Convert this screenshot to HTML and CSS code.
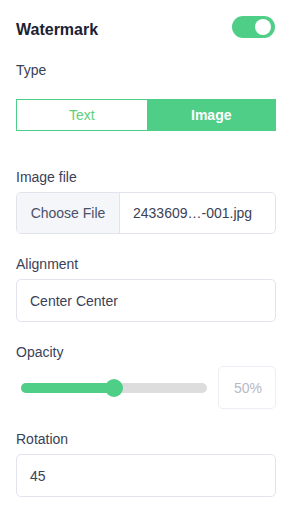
FILE: index.html
```html
<!DOCTYPE html>
<html>
<head>
<meta charset="utf-8">
<link rel="stylesheet" href="styles.css">
</head>
<body>
<div class="panel">
  <div class="header">
    <span class="title">Watermark</span>
    <span class="toggle"><span class="knob"></span></span>
  </div>
  <div class="label type-label">Type</div>
  <div class="segment">
    <div class="seg seg-off">Text</div>
    <div class="seg seg-on">Image</div>
  </div>
  <div class="label first">Image file</div>
  <div class="file box">
    <div class="choose">Choose File</div>
    <div class="fname">2433609…-001.jpg</div>
  </div>
  <div class="label">Alignment</div>
  <div class="box field">Center Center</div>
  <div class="label">Opacity</div>
  <div class="slider-row">
    <div class="slider">
      <div class="track"><div class="fill" style="width:50%"></div></div>
      <div class="thumb" style="left:50%"></div>
    </div>
    <div class="box pct">50%</div>
  </div>
  <div class="label">Rotation</div>
  <div class="box field">45</div>
</div>
</body>
</html>
```
FILE: styles.css
```css
html, body {
  margin: 0;
  padding: 0;
  background: #ffffff;
}
body {
  font-family: "Liberation Sans", Arial, sans-serif;
  color: #3b4157;
}
.panel {
  width: 260px;
  padding: 16px 19px 0 16px;
  display: flex;
  flex-direction: column;
}
.header {
  display: flex;
  justify-content: space-between;
  align-items: center;
  height: 22px;
  padding-right: 1px;
}
.title {
  font-weight: bold;
  font-size: 16px;
  color: #1b2132;
  margin-top: 6px;
}
.toggle {
  width: 43px;
  height: 22px;
  border-radius: 11px;
  background: #4fce88;
  position: relative;
  display: block;
}
.knob {
  position: absolute;
  right: 4px;
  top: 3px;
  width: 16px;
  height: 16px;
  border-radius: 50%;
  background: #fff;
}
.label {
  font-size: 14px;
  line-height: 20px;
  height: 20px;
  margin-top: 20px;
  margin-bottom: 5px;
}
.type-label {
  margin-top: 22px;
  margin-bottom: 19px;
}
.label.first {
  margin-top: 36px;
}
.segment {
  display: flex;
  height: 32px;
  font-size: 14px;
}
.seg {
  flex: 1;
  display: flex;
  align-items: center;
  justify-content: center;
}
.seg-off {
  border: 1px solid #4fce88;
  border-right: none;
  color: #5fcf7a;
}
.seg-on {
  background: #4fce88;
  color: #fff;
  font-weight: bold;
}
.box {
  box-sizing: border-box;
  height: 43px;
  border: 1px solid #e2e4ed;
  border-radius: 5px;
  font-size: 14px;
  color: #3b4157;
}
.file {
  display: flex;
  height: 42px;
  overflow: hidden;
}
.choose {
  width: 102px;
  background: #f4f6fa;
  border-right: 1px solid #e2e4ed;
  display: flex;
  align-items: center;
  justify-content: center;
  color: #4b5068;
}
.fname {
  flex: 1;
  display: flex;
  align-items: center;
  padding-left: 13px;
}
.field {
  display: flex;
  align-items: center;
  padding-left: 13px;
}
.slider-row {
  display: flex;
  align-items: center;
  gap: 11px;
  margin-top: -1px;
}
.slider {
  flex: 1;
  position: relative;
  height: 18px;
  margin-left: 5px;
  margin-right: 0;
}
.track {
  position: absolute;
  left: 0;
  right: 0;
  top: 4px;
  height: 10px;
  border-radius: 5px;
  background: #dddddd;
  overflow: hidden;
}
.fill {
  height: 100%;
  background: #4fce88;
}
.thumb {
  position: absolute;
  top: 0;
  width: 18px;
  height: 18px;
  margin-left: -9px;
  border-radius: 50%;
  background: #4fce88;
}
.pct {
  width: 58px;
  display: flex;
  align-items: center;
  justify-content: center;
  color: #b6b9c6;
  border-color: #eceef3;
  padding-left: 2px;
}
```
